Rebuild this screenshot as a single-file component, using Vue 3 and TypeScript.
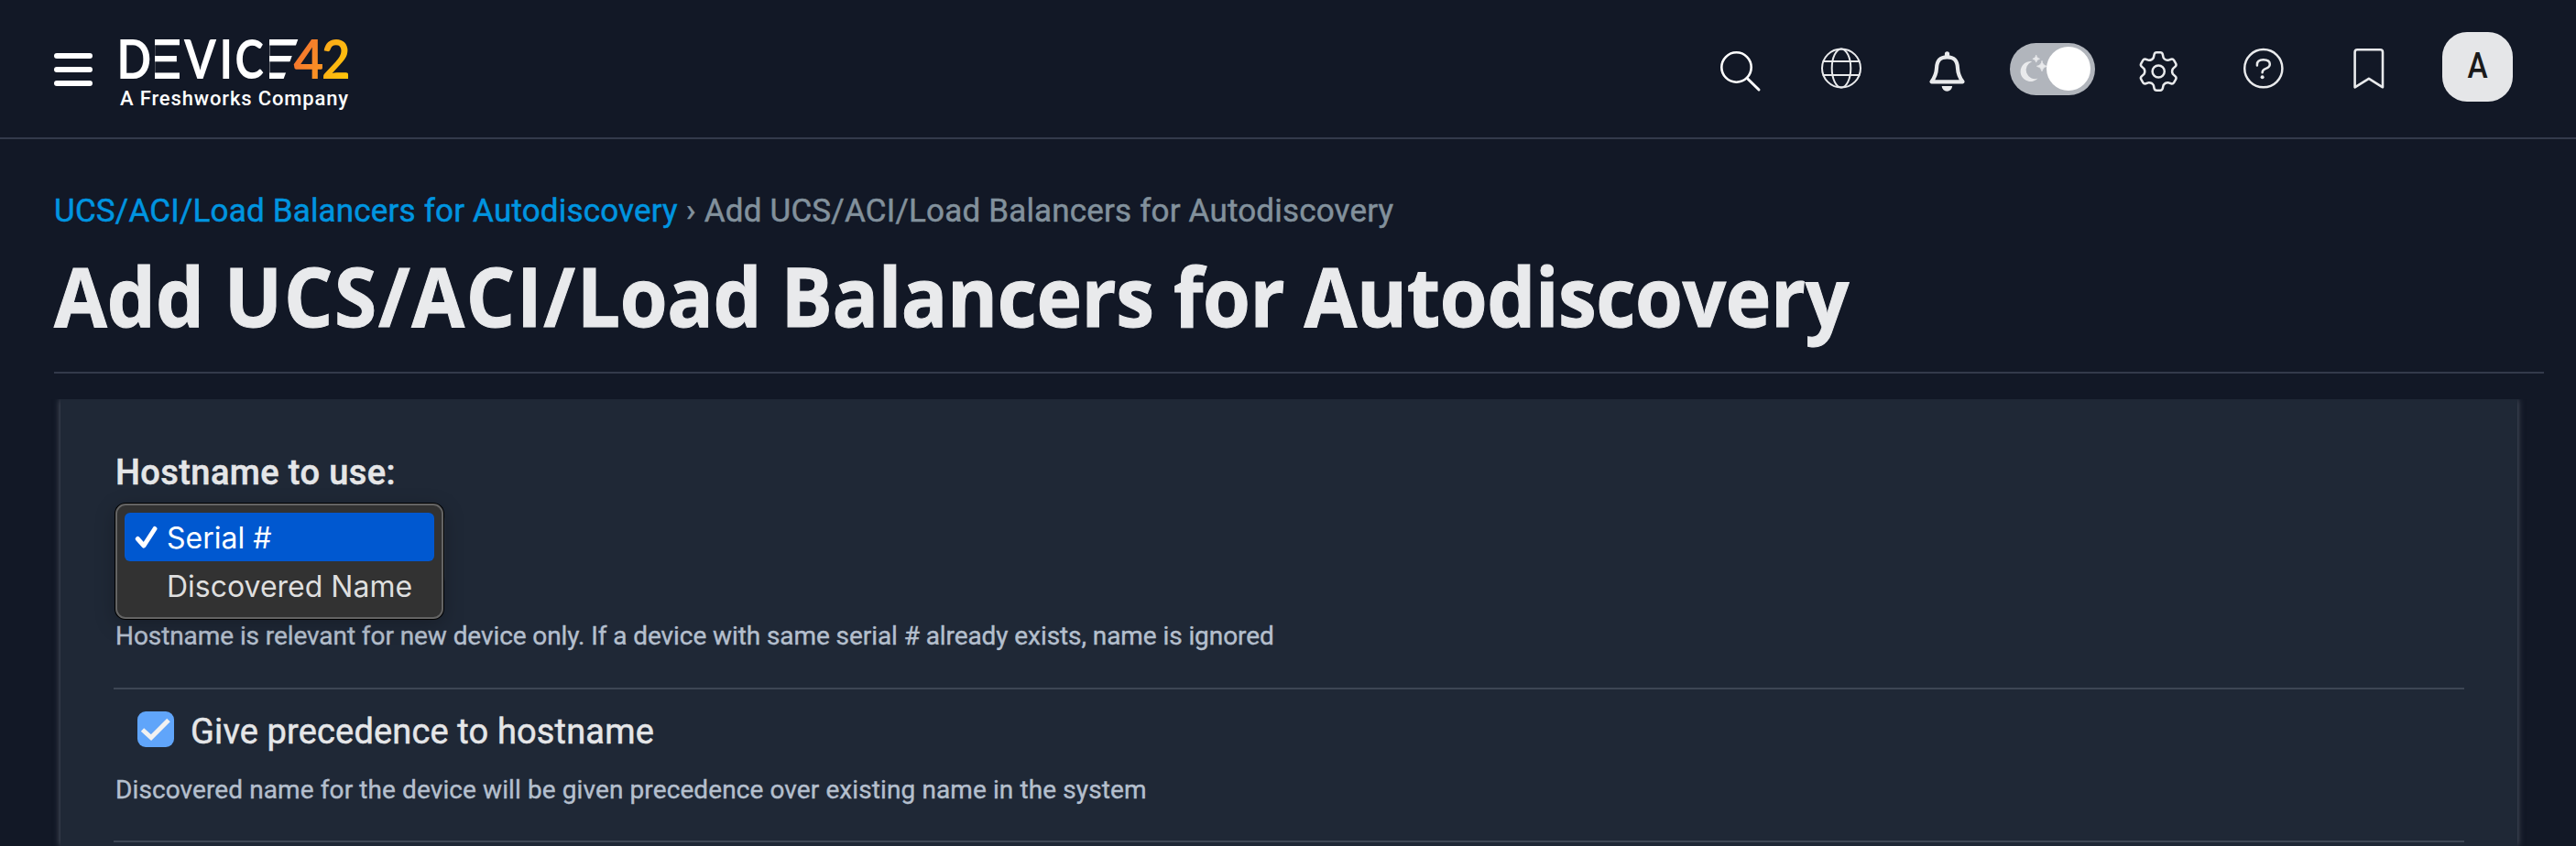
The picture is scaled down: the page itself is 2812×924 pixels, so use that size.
<script setup lang="ts">
import { ref } from 'vue'

const link = 'UCS/ACI/Load Balancers for Autodiscovery'
const title = 'Add UCS/ACI/Load Balancers for Autodiscovery'
const options = ['Serial #', 'Discovered Name']
const selected = ref(0)

// Six-tooth cog outline around the origin.
function cog(): string {
  const turn = (x: number, y: number, k: number) => {
    const a = (k * Math.PI) / 3
    return `${(x * Math.cos(a) - y * Math.sin(a)).toFixed(2)} ${(x * Math.sin(a) + y * Math.cos(a)).toFixed(2)}`
  }
  let d = ''
  for (let k = 0; k < 6; k++) {
    d += `${k ? 'L' : 'M'}${turn(-5.4, -15, k)}L${turn(-4.6, -18.6, k)}Q${turn(-4.1, -20.7, k)} ${turn(-2, -20.7, k)}`
    d += `L${turn(2, -20.7, k)}Q${turn(4.1, -20.7, k)} ${turn(4.6, -18.6, k)}L${turn(5.4, -15, k)}`
    d += `Q${turn(7, -12.2, k)} ${turn(-5.4, -15, k + 1)}`
  }
  return d + 'Z'
}
const cogPath = cog()
</script>

<template>
  <div class="page">
    <header class="topbar">
      <button class="burger" aria-label="Menu"><i></i><i></i><i></i></button>
      <div class="brand">
        <svg class="wordmark" width="252" height="48" viewBox="130 41 252 48" aria-label="DEVICE42">
          <defs>
            <linearGradient id="four" x1="0" y1="0" x2="1" y2="1"><stop offset="0" stop-color="#f26532" /><stop offset="1" stop-color="#fc9f20" /></linearGradient>
            <linearGradient id="two" x1="0" y1="0" x2="1" y2="1"><stop offset="0" stop-color="#fba01f" /><stop offset="1" stop-color="#ffcb05" /></linearGradient>
            <clipPath id="e1"><path d="M169 40h27v50h-27z" /></clipPath>
            <clipPath id="e2"><path d="M294 40H326.400L308.200 90H294z" /></clipPath>
          </defs>
          <g class="glyphs">
            <text transform="translate(127.600 86) scale(.846 1)">D</text>
            <g clip-path="url(#e1)"><text transform="translate(149 86) scale(1.600 1)">E</text></g>
            <text transform="translate(200.900 86) scale(.860 1)">V</text>
            <text transform="translate(239.600 86) scale(.840 1)">I</text>
            <text transform="translate(256.400 86) scale(.810 1)">C</text>
            <g clip-path="url(#e2)"><text transform="translate(271 86) scale(1.850 1)">E</text></g>
            <text class="four" transform="translate(320.500 86) scale(.970 1)">4</text>
            <text class="two" transform="translate(351.100 86) scale(.930 1)">2</text>
          </g>
        </svg>
        <span class="tagline">A Freshworks Company</span>
      </div>
      <nav class="tools">
        <svg viewBox="0 0 115 150" class="ico white"><circle cx="57.500" cy="73.500" r="16.200" stroke-width="2.600" /><path d="M69.500 85.800 82 98" stroke-width="3" /></svg>
        <svg viewBox="0 0 115 150" class="ico"><g stroke-width="2"><circle cx="57" cy="74.500" r="21" /><ellipse cx="57" cy="74.500" rx="10.300" ry="21" /><path d="M37.500 67h39M37.500 82h39" /></g></svg>
        <svg viewBox="0 0 115 150" class="ico">
          <path d="M40.500 89.300H74.500C71 84.500 69.300 81 69 74.500C68.700 66.500 65.500 62.300 57.500 62.300C49.500 62.300 46.300 66.500 46 74.500C45.700 81 44 84.500 40.500 89.300Z" stroke-width="4.200" />
          <path d="M57.500 58.800V60" stroke-width="5.200" />
          <path d="M51.700 94H63.100A5.700 5.700 0 0 1 51.700 94Z" class="solid" />
        </svg>
        <svg viewBox="0 0 115 150" class="ico">
          <rect x="11" y="47" width="93" height="57" rx="28.500" class="track" />
          <path d="M35.200 67.200A11 11 0 1 0 41.600 85.600A9.600 9.600 0 0 1 35.200 67.200Z" class="solid" />
          <path d="M39.700 60.500Q40.200 63.800 43.500 64.300Q40.200 64.800 39.700 68.100Q39.200 64.800 35.900 64.300Q39.200 63.800 39.700 60.500Z" class="solid spark" />
          <path d="M46 66.800Q46.800 71.500 51.500 72.300Q46.800 73.100 46 77.800Q45.200 73.100 40.500 72.300Q45.200 71.500 46 66.800Z" class="solid spark" />
          <circle cx="75" cy="75" r="24" class="knob" />
        </svg>
        <svg viewBox="0 0 115 150" class="ico"><g transform="translate(58.200 78)" stroke-width="2.500"><path :d="cogPath" /><circle r="6.600" /></g></svg>
        <svg viewBox="0 0 115 150" class="ico">
          <circle cx="57.800" cy="74.700" r="20.600" stroke-width="2.500" />
          <path d="M50.900 71.500V70.500Q50.900 65.200 57.700 65.200Q64.800 65.200 64.800 70Q64.800 73.300 60.500 74.900Q56.600 76.300 56.600 79.300" stroke-width="2.500" />
          <circle cx="56.600" cy="84.300" r="2" class="solid" />
        </svg>
        <svg viewBox="0 0 115 150" class="ico"><path d="M42.600 95.300V57Q42.600 54.300 45.300 54.300H70.300Q73 54.300 73 57V95.300L57.900 85.800Z" stroke-width="2.600" /></svg>
        <div class="avatar"><span>A</span></div>
      </nav>
    </header>

    <main class="content">
      <div class="crumbs"><a>{{ link }}</a><span class="sep">›</span><span class="here">{{ title }}</span></div>
      <h1><span class="heading">Add <span class="loose">UCS/ACI/</span><span class="tight">Load Balancers for Autodiscovery</span></span></h1>

      <section class="panel">
        <div class="row">
          <label class="label strong">Hostname to use:</label>
          <div class="select">
            <ul class="menu">
              <li v-for="(o, i) in options" :key="o" :class="{ active: i === selected }" @click="selected = i">
                <svg v-if="i === selected" width="26" height="26" viewBox="0 0 26 26"><path d="M3.300 14.500 10 22 22 3.500" /></svg>
                <span>{{ o }}</span>
              </li>
            </ul>
          </div>
          <p class="help one">Hostname is relevant for new device only. If a device with same serial # already exists, name is ignored</p>
        </div>
        <div class="row check">
          <div class="line">
            <span class="box"><svg width="40" height="39" viewBox="0 0 40 39"><path d="M5.500 20 15 28.500 34 9.500" /></svg></span>
            <label class="label">Give precedence to hostname</label>
          </div>
          <p class="help two">Discovered name for the device will be given precedence over existing name in the system</p>
        </div>
      </section>
    </main>
  </div>
</template>

<style>
html, body { background: #121826; }
</style>

<style scoped>
.page { width: 2812px; height: 924px; overflow: hidden; background: #121826; color: #e5e6e8; font-family: Roboto, "Liberation Sans", sans-serif; }
.topbar { height: 150px; border-bottom: 2px solid #333a4b; display: flex; align-items: flex-start; }
.burger { margin: 58px 0 0 59px; padding: 0; width: 42px; border: 0; background: none; display: grid; gap: 9px; }
.burger i { height: 6px; border-radius: 3px; background: #fff; }
.brand { margin: 41px 0 0 29px; width: 252px; display: flex; flex-direction: column; }
.wordmark { display: block; overflow: visible; }
.glyphs text { font: 700 58.500px Lato, sans-serif; fill: #fff; }
.glyphs .four { fill: url(#four); }
.glyphs .two { fill: url(#two); }
.tagline { margin: 5px 0 0 1px; font-size: 22px; line-height: 28px; font-weight: 500; letter-spacing: .85px; color: #fff; white-space: nowrap; }
.tools { margin-left: auto; padding-right: 54px; display: grid; grid-template-columns: repeat(8, 115px); height: 150px; }
.ico { width: 115px; height: 150px; display: block; fill: none; stroke: #e9eaec; stroke-linecap: round; stroke-linejoin: round; }
.white { stroke: #fff; }
.solid { fill: #e9eaec; stroke: none; }
.spark { stroke: #e9eaec; stroke-width: .8; }
.track { fill: #b1b5bc; stroke: none; }
.knob { fill: #fff; stroke: none; }
.avatar { margin: 35px 0 0 23px; width: 77px; height: 76px; border-radius: 27px; background: #e5e6e8; color: #1a1a1a; display: flex; justify-content: center; font-size: 38px; line-height: 74px; font-weight: 500; }
.avatar span { transform: scaleX(.88); }

.content { padding: 59px 35px 0 59px; }
.crumbs { display: flex; font-size: 35px; line-height: 40px; height: 40px; color: #82919c; white-space: nowrap; -webkit-text-stroke: .5px currentColor; }
.crumbs a { color: #0095e0; letter-spacing: .18px; }
.sep { width: 29px; text-align: center; }
.here { letter-spacing: .18px; }
h1 { margin: 21px 0 0; padding-bottom: 34px; border-bottom: 2px solid #333a4b; font: 700 90px/100px "Open Sans", sans-serif; height: 100px; color: #e9eaec; white-space: nowrap; }
.heading { display: inline-block; transform: scaleX(.932); transform-origin: 0 50%; -webkit-text-stroke: 1px currentColor; }
.loose { letter-spacing: 1.8px; }
.tight { letter-spacing: -.45px; }
.panel { margin: 28px 29px 0 7px; padding: 58px 58px 0; height: 488px; box-sizing: border-box; background: #1f2836; box-shadow: 0 0 7px rgba(130, 138, 150, .65); clip-path: inset(0 -10px); }
.row { border-bottom: 2px solid #3d4654; }
.label { display: block; font-size: 38px; line-height: 44px; height: 44px; white-space: nowrap; -webkit-text-stroke: .5px currentColor; }
.strong { font-weight: 500; letter-spacing: .4px; padding-left: 2px; }
.select { position: relative; height: 140px; padding: 12px 0 0 2px; box-sizing: border-box; }
.select::before { content: ""; position: absolute; left: 3px; top: 16px; width: 359px; height: 92px; border-radius: 16px; background: #2b3442; }
.menu { position: relative; margin: 0; padding: 8px; width: 358px; height: 126px; box-sizing: border-box; list-style: none; border: 2px solid #646464; border-radius: 11px; background: #323232; box-shadow: 0 0 0 1px #000, 0 6px 22px rgba(0, 0, 0, .25); font: 32px/53px Inter, sans-serif; color: #dfdfdf; }
.menu li { height: 53px; padding-left: 46px; border-radius: 6px; white-space: nowrap; display: flex; align-items: center; }
.menu li span { padding-top: 1px; }
.menu li.active { background: #0058d0; color: #fff; padding-left: 11px; }
.menu li svg { margin-right: 9px; flex: none; fill: none; stroke: #fff; stroke-width: 5; stroke-linecap: round; stroke-linejoin: round; }
.help { margin: 0; padding-left: 2px; font-size: 28px; line-height: 32px; color: #b4bfcd; white-space: nowrap; -webkit-text-stroke: .4px currentColor; }
.one { padding-top: 1px; padding-bottom: 40px; letter-spacing: -.08px; }
.two { margin-top: 26px; padding-bottom: 39px; letter-spacing: .1px; }
.check { padding-top: 24px; }
.line { display: flex; padding-left: 26px; height: 44px; letter-spacing: .15px; }
.box { width: 40px; height: 39px; border-radius: 9px; background: #60a5fa; margin-right: 18px; }
.box svg { display: block; fill: none; stroke: #f1f1f1; stroke-width: 5; }
</style>
